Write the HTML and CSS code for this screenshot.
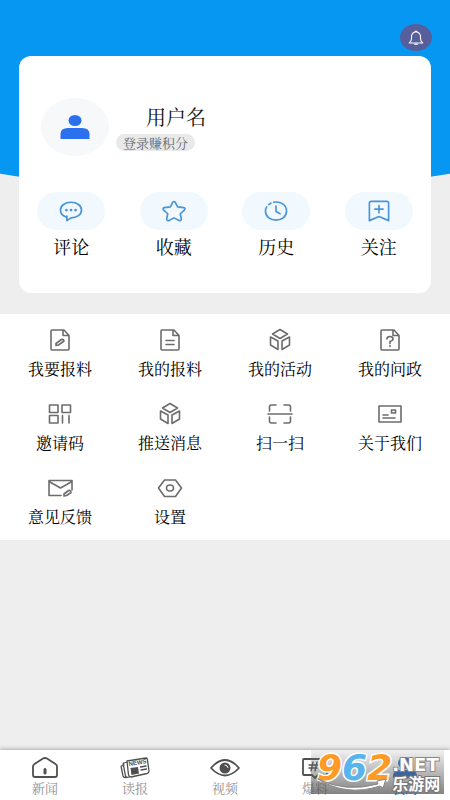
FILE: index.html
```html
<!DOCTYPE html>
<html lang="zh-CN">
<head>
<meta charset="utf-8">
<meta name="viewport" content="width=device-width, initial-scale=1">
<title>我的</title>
<link rel="stylesheet" href="styles.css">
</head>
<body>
<svg class="defs" aria-hidden="true">
  <symbol id="cube" viewBox="0 0 24 24"><path d="M12 1.500 19.500 6 12 10.500 4.500 6ZM2.500 9 10 13V21.500L2.500 17ZM21.500 9 14 13V21.500L21.500 17Z"/></symbol>
  <symbol id="page" viewBox="0 0 24 24"><path d="M15 2H4Q3 2 3 3V21Q3 22 4 22H20Q21 22 21 21V7.500L16 2H15V7.500H21"/></symbol>
</svg>
<div class="app">
  <header class="top">
    <button class="bell" aria-label="通知">
      <svg viewBox="0 0 20 20"><path d="M2.500 15.500Q5 13.500 5 10.500V8Q5.500 3.500 10 3Q14.500 3.500 15 8V10.500Q15 13.500 17.500 15.500ZM8.500 17H11.500M9 2.500H11"/></svg>
    </button>
  </header>
  <main>
    <section class="card">
      <div class="profile">
        <div class="avatar">
          <svg viewBox="0 0 30 26"><ellipse cx="15" cy="6.500" rx="6.500" ry="5.500"/><path d="M.5 25V20Q.5 14 8 14H22Q29.500 14 29.500 20V25Z"/></svg>
        </div>
        <div class="who">
          <h1>用户名</h1>
          <a class="badge" href="#login">登录赚积分</a>
        </div>
      </div>
      <nav class="quick">
        <a href="#comments"><span class="pill"><svg viewBox="0 0 26 24"><path d="M7.500 18.500Q1.500 16.500 1.500 11C1.500 6 6.500 2.500 13 2.500S24.500 6 24.500 11S19.500 19.500 13 19.500L8.500 22.500V17.500"/><path class="dots" d="M8 11H8.010M13 11H13.010M18 11H18.010"/></svg></span>评论</a>
        <a href="#favorites"><span class="pill"><svg viewBox="0 0 26 24"><path d="M11.500 2.800Q13 .5 14.500 2.800L17 7.500L23.500 8.300Q26 9 24.300 11L19.800 15L21 20.500Q21 23 18.500 22.300L13 19.500L7.500 22.300Q5 23 5 20.500L6.200 15L1.700 11Q0 9 2.500 8.300L9 7.500Z"/></svg></span>收藏</a>
        <a href="#history"><span class="pill"><svg viewBox="0 0 26 24"><path d="M10.500 2.500C18 1 24.500 5.500 24.500 12C24.500 18 19.500 22 13 22S1.500 18 1.500 12Q1.500 9.500 2.800 7.500M5 5L7.500 3.500M13 6.500V12.500L17.500 15"/></svg></span>历史</a>
        <a href="#follow"><span class="pill"><svg viewBox="0 0 26 24"><path d="M2.500 22.500V3.500Q2.500 1.500 4.500 1.500H21.500Q23.500 1.500 23.500 3.500V22.500L13 18ZM13 6V14M8.500 10H17.500"/></svg></span>关注</a>
      </nav>
    </section>
    <nav class="menu">
      <a href="#report"><svg viewBox="0 0 24 24"><use href="#page"/><path d="M8 15.500 13.500 11.500Q15.500 11 16 13L10.500 17L8 17.500Z"/></svg>我要报料</a>
      <a href="#reports"><svg viewBox="0 0 24 24"><use href="#page"/><path d="M8 12.500H16M8 16.500H16"/></svg>我的报料</a>
      <a href="#activities"><svg><use href="#cube"/></svg>我的活动</a>
      <a href="#questions"><svg viewBox="0 0 24 24"><use href="#page"/><path d="M9 11Q9 8.500 12 8.500T15 11Q15 12.500 12 13.500V15.500M12 17.500V18.500"/></svg>我的问政</a>
      <a href="#invite"><svg viewBox="0 0 24 24"><path d="M1.500 3H10V10.500H1.500ZM14 3H22.500V10.500H14ZM1.500 13.500H10V21H1.500ZM14.500 13.500V21M21 13.500V21"/></svg>邀请码</a>
      <a href="#push"><svg><use href="#cube"/></svg>推送消息</a>
      <a href="#scan"><svg viewBox="0 0 24 24"><path d="M1.500 9V5Q1.500 3 3.500 3H8M16 3H20.500Q22.500 3 22.500 5V9M1.500 15V19Q1.500 21 3.500 21H8M16 21H20.500Q22.500 21 22.500 19V15M0 12H24"/></svg>扫一扫</a>
      <a href="#about"><svg viewBox="0 0 24 24"><path d="M1 4H23V20H1ZM13.500 8H17.500V11H13.500ZM5 13H10M5 16H17"/></svg>关于我们</a>
      <a href="#feedback"><svg viewBox="0 0 26 24"><path d="M14 19.500H2V4.500H25V14M2 5.500 13.500 12 25 5.500M17 18 21.500 14.500Q24 14 24 16.500L19.500 19.500L17 20Z"/></svg>意见反馈</a>
      <a href="#settings"><svg viewBox="0 0 24 24"><path d="M6.500 4H17.500L23.500 12L17.500 20.500H6.500L.5 12Z"/><ellipse cx="12" cy="12" rx="3.500" ry="3"/></svg>设置</a>
    </nav>
  </main>
  <footer class="bottom">
    <nav class="tabs">
      <a href="#news"><svg viewBox="0 0 30 24"><path d="M3 10.500Q3 9 4.500 8L13 2.500Q15 1.500 17 2.500L25.500 8Q27 9 27 10.500V19Q27 21 25 21H5Q3 21 3 19Z"/><path class="heavy" d="M15 13.500V17"/></svg>新闻</a>
      <a href="#paper"><svg class="thin" viewBox="0 0 30 24"><path d="M7 5 26 2Q27 2 27.300 3L29 15Q29 17 27 17.500L11 21Q9 21 8.500 19ZM7 6 4 7Q3 7 3.200 8L5.500 20Q6 22 9.500 21M4 9 1.500 10Q1 10 1.200 11L3 20Q3.500 22 6.500 21.500M20.500 11 26 10M21 14 26.500 13"/><path class="solid" d="M10.500 12 18 11 19 17.500 11.500 19Z"/><text x="9" y="10" transform="rotate(-9 9 10)">NEWS</text></svg>读报</a>
      <a href="#video"><svg viewBox="0 0 30 24"><path d="M1 12Q15-4 29 12Q15 27 1 12Z"/><circle class="solid" cx="15" cy="12" r="5.500"/><path class="glint" d="M15 9Q17.500 9 18 11.500"/></svg>视频</a>
      <a href="#tips"><svg viewBox="0 0 30 24"><path d="M12 19H4Q3 19 3 18V4Q3 3 4 3H26Q27 3 27 4V18Q27 19 26 19H18L15 22Z"/><path class="hash" d="M13 6 11 15M17 6 15 15M9 9H18M9 12H17"/></svg>爆料</a>
      <a class="current" href="#me"><svg viewBox="0 0 30 24"><ellipse class="solid" cx="15" cy="7" rx="7" ry="6"/><path class="solid" d="M3 22V19Q4 14 10 14H20Q26 14 27 19V22Z"/></svg>我的</a>
    </nav>
    <div class="mark">
      <b class="digits">9<i>6</i>2</b>
      <div class="site"><b class="net">.NET</b><b class="cn">乐游网</b></div>
      <svg class="swoosh" viewBox="0 0 70 14"><path d="M1 1Q28 15 61 6L60 3L69 1L66 10L63 8Q29 19 1 1Z"/></svg>
    </div>
  </footer>
</div>
</body>
</html>
```
FILE: styles.css
```css
* { box-sizing: border-box; }
body {
  margin: 0;
  background: #eee;
  color: #111;
  font-family: "Noto Serif CJK SC", "Noto Sans CJK SC", serif;
}
a { color: inherit; text-decoration: none; }
svg { fill: none; stroke-linecap: round; stroke-linejoin: round; }
.defs { position: absolute; width: 0; height: 0; }
.app {
  position: relative;
  display: flex;
  flex-direction: column;
  min-height: 100vh;
  overflow: hidden;
}
.app::before {
  content: "";
  position: absolute;
  z-index: -1;
  top: 0;
  left: -10%;
  width: 120%;
  height: 188px;
  background: #0697f3;
  border-radius: 0 0 50% 50% / 0 0 32px 32px;
}
.top {
  display: flex;
  justify-content: flex-end;
  padding: 24px 18px 5px;
}
.bell {
  display: grid;
  place-items: center;
  width: 32px;
  height: 27px;
  padding: 0;
  border: 0;
  border-radius: 50%;
  background: #565f9b;
}
.bell svg { width: 20px; height: 18px; stroke: #fff; stroke-width: 1.2; }
main { flex: 1; }
.card {
  margin: 0 19px 21px;
  padding: 42px 1px 35px;
  border-radius: 12px;
  background: #fff;
}
.profile { display: flex; gap: 7px; padding: 0 21px; }
.avatar {
  display: grid;
  place-items: center;
  width: 68px;
  height: 58px;
  border-radius: 50%;
  background: #f7f8fa;
}
.avatar svg { width: 30px; height: 26px; fill: #2b70ee; }
.who { display: flex; flex-direction: column; align-items: flex-start; gap: 4px; padding-top: 6px; }
h1 { margin: 0 0 0 30px; font-size: 20px; font-weight: 400; line-height: 26px; }
.badge {
  padding: 0 7px;
  border-radius: 9px;
  background: #e9e9e9;
  color: #666;
  font-size: 13px;
  line-height: 17px;
}
.quick { display: grid; grid-template-columns: repeat(4, 1fr); margin-top: 36px; }
.quick a {
  display: flex;
  flex-direction: column;
  align-items: center;
  gap: 4px;
  color: #000;
  font-size: 18px;
  line-height: 24px;
}
.pill {
  display: grid;
  place-items: center;
  width: 68px;
  height: 38px;
  border-radius: 19px;
  background: #f1f9fe;
}
.pill svg { width: 26px; height: 22px; stroke: #4794d6; stroke-width: 1.8; }
.pill .dots { stroke-width: 3; }
.menu {
  display: grid;
  grid-template-columns: repeat(4, 1fr);
  row-gap: 23px;
  padding: 14px 5px 13px;
  background: #fff;
  color: #000;
}
.menu a {
  display: flex;
  flex-direction: column;
  align-items: center;
  gap: 7px;
  font-size: 16px;
  line-height: 20px;
}
.menu svg { width: 26px; height: 24px; stroke: #6c6c6c; stroke-width: 1.6; }
.bottom { position: relative; background: #fff; box-shadow: 0 -1px 4px #aaa; }
.tabs { display: grid; grid-template-columns: repeat(5, 1fr); padding: 6px 0 4px; }
.tabs a {
  display: flex;
  flex-direction: column;
  align-items: center;
  color: #929292;
  font-size: 13px;
  line-height: 16px;
}
.tabs svg { width: 30px; height: 24px; stroke: #505050; stroke-width: 1.8; }
.tabs .thin { stroke-width: 1.3; }
.tabs .heavy { stroke-width: 3; }
.tabs .hash { stroke-width: 1.3; }
.tabs .solid { fill: #505050; stroke: none; }
.tabs .glint { stroke: #fff; stroke-width: 1; }
.tabs text { fill: #505050; stroke: none; font: bold 6px "Liberation Sans", sans-serif; }
.tabs .current { color: #2868b8; }
.tabs .current .solid { fill: #2868c8; }
.mark {
  position: absolute;
  right: 6px;
  bottom: 6px;
  display: flex;
  width: 133px;
  height: 44px;
  padding-left: 6px;
  background: linear-gradient(#9992, #555b);
  color: #fff;
  font-family: "DejaVu Sans", sans-serif;
  white-space: nowrap;
  pointer-events: none;
}
.digits {
  color: #ff9a24;
  font-size: 36px;
  font-style: italic;
  line-height: 36px;
  -webkit-text-stroke: 3px #fff;
  paint-order: stroke fill;
}
.digits i { color: #58b5ec; }
.site { display: flex; flex-direction: column; padding-top: 6px; }
.net { font-size: 18px; line-height: 18px; -webkit-text-stroke: 2px #888; paint-order: stroke fill; }
.cn {
  font-family: "Noto Sans CJK SC", sans-serif;
  font-size: 16px;
  line-height: 18px;
  -webkit-text-stroke: 2px #777;
  paint-order: stroke fill;
}
.swoosh { position: absolute; left: 6px; bottom: 2px; width: 70px; height: 14px; fill: #fff; stroke: #888; stroke-width: 1; }
```
